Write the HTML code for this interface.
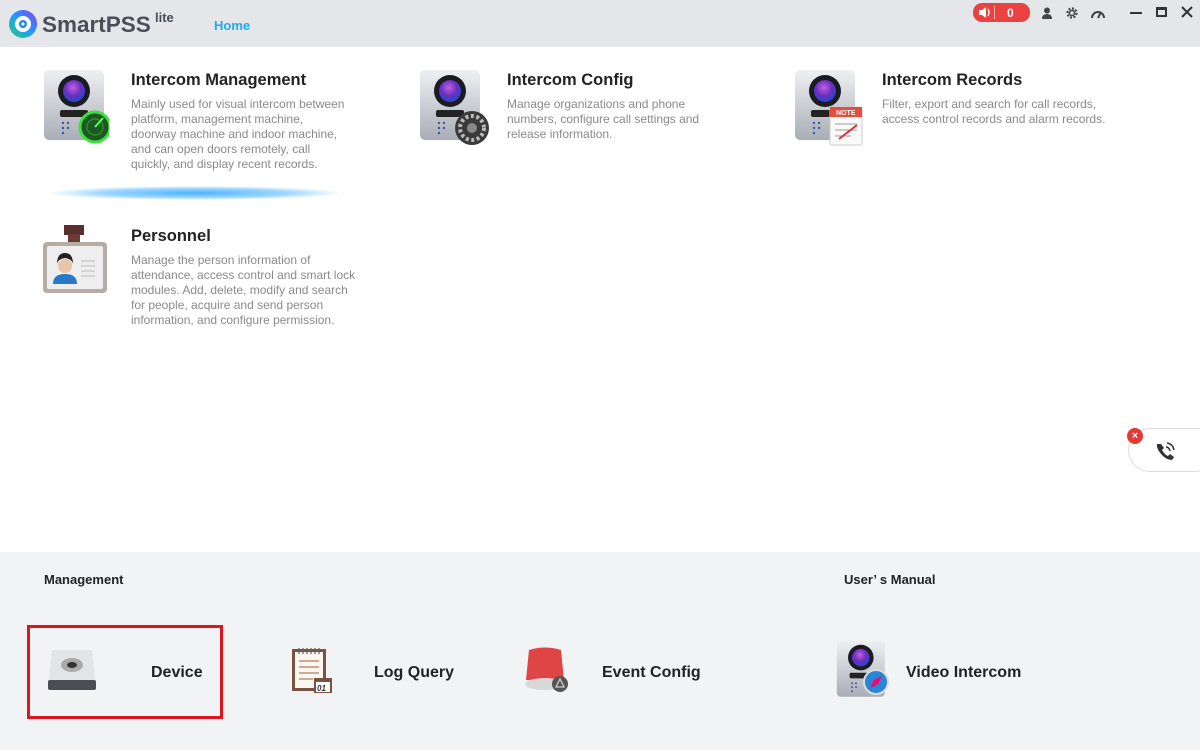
<!DOCTYPE html>
<html><head><meta charset="utf-8"><style>
*{margin:0;padding:0;box-sizing:border-box}
body{width:1200px;height:750px;overflow:hidden;font-family:"Liberation Sans",sans-serif;background:#fff;position:relative}
.hdr{position:absolute;left:0;top:0;width:1200px;height:47px;background:#e4e6ea}
.abs{position:absolute}
.t{position:absolute;font-weight:bold;font-size:16.5px;color:#222}
.d{position:absolute;font-size:12px;line-height:15px;color:#8a8a8a;white-space:nowrap}
.bot{position:absolute;left:0;top:552px;width:1200px;height:198px;background:#f2f3f5}
.lbl{position:absolute;font-size:13px;font-weight:bold;color:#222}
.it{position:absolute;font-size:16px;font-weight:bold;color:#222}
</style></head><body>
<div class="hdr">
 <svg class="abs" style="left:8px;top:9px" width="30" height="30" viewBox="0 0 30 30"><defs><linearGradient id="lg" x1="0" y1="1" x2="1" y2="0"><stop offset="0" stop-color="#2ecc71"/><stop offset=".5" stop-color="#1e9bff"/><stop offset="1" stop-color="#8a3cf0"/></linearGradient></defs><circle cx="15" cy="15" r="14" fill="url(#lg)"/><circle cx="15" cy="15" r="8" fill="#fff"/><circle cx="15" cy="15" r="4" fill="#1e88e5"/><circle cx="15" cy="15" r="1.6" fill="#fff"/></svg>
 <div class="abs" style="left:42px;top:12px;font-size:22.5px;font-weight:bold;color:#4a4f57">SmartPSS</div>
 <div class="abs" style="left:155px;top:10px;font-size:13px;font-weight:bold;color:#4a4f57">lite</div>
 <div class="abs" style="left:214px;top:18px;font-size:13px;font-weight:bold;color:#1eaaf1">Home</div>
 <div class="abs" style="left:973px;top:3px;width:57px;height:19px;border-radius:9px;background:#ec4141"></div>
 <svg class="abs" style="left:978px;top:6px" width="14" height="13" viewBox="0 0 14 13"><path d="M1 4h3l4-3v11l-4-3H1z" fill="#fff"/><path d="M10 3q2 3.5 0 7" stroke="#fff" fill="none" stroke-width="1.3"/></svg>
 <div class="abs" style="left:994px;top:6px;width:1px;height:13px;background:#fff;opacity:.6"></div>
 <div class="abs" style="left:1007px;top:6px;font-size:12px;font-weight:bold;color:#fff">0</div>
 <svg class="abs" style="left:1040px;top:6px" width="14" height="14" viewBox="0 0 14 14"><circle cx="7" cy="4.5" r="3" fill="#444"/><path d="M2 13q0-5 5-5t5 5z" fill="#444"/></svg>
 <svg class="abs" style="left:1065px;top:6px" width="14" height="14" viewBox="0 0 14 14"><circle cx="7" cy="7" r="4.5" fill="none" stroke="#444" stroke-width="2.2" stroke-dasharray="2 1.5"/><circle cx="7" cy="7" r="2.5" fill="none" stroke="#444" stroke-width="1.5"/></svg>
 <svg class="abs" style="left:1090px;top:6px" width="16" height="14" viewBox="0 0 16 14"><path d="M2 12a6 6 0 0 1 12 0" fill="none" stroke="#444" stroke-width="2"/><path d="M8 12l3-6" stroke="#444" stroke-width="2"/></svg>
 <div class="abs" style="left:1130px;top:12px;width:12px;height:2px;background:#333"></div>
 <div class="abs" style="left:1156px;top:7px;width:11px;height:10px;border:2px solid #333;border-top-width:3px"></div>
 <svg class="abs" style="left:1181px;top:6px" width="12" height="12" viewBox="0 0 12 12"><path d="M1 1l10 10M11 1L1 11" stroke="#333" stroke-width="2"/></svg>
</div>

<svg width="0" height="0" style="position:absolute"><defs>
<linearGradient id="pan" x1="0" y1="0" x2="0" y2="1"><stop offset="0" stop-color="#eef0f3"/><stop offset="1" stop-color="#a9adb5"/></linearGradient>
<radialGradient id="lens" cx=".45" cy=".35" r=".6"><stop offset="0" stop-color="#c060e0"/><stop offset=".6" stop-color="#6b2fc0"/><stop offset="1" stop-color="#2f45c8"/></radialGradient>
<g id="ic"><rect x="1" y="1" width="60" height="70" rx="5" fill="url(#pan)"/><circle cx="31" cy="22" r="16" fill="#1b1b22"/><circle cx="31" cy="22" r="11" fill="url(#lens)"/><rect x="17" y="41" width="28" height="7" rx="2" fill="#222"/><g fill="#3a5ab0"><circle cx="20" cy="54" r="1.2"/><circle cx="25" cy="54" r="1.2"/><circle cx="20" cy="59" r="1.2"/><circle cx="25" cy="59" r="1.2"/><circle cx="20" cy="64" r="1.2"/></g></g>
</defs></svg>

<svg class="abs" style="left:43px;top:69px" width="66" height="80"><use href="#ic"/><circle cx="52" cy="58" r="15" fill="#1a5a20" stroke="#3ee03e" stroke-width="3"/><circle cx="52" cy="58" r="8" fill="none" stroke="#2e8a2e" stroke-width="1.5"/><path d="M52 58l8-9" stroke="#5f5" stroke-width="2"/></svg>
<div class="abs" style="left:50px;top:186px;width:290px;height:14px;border-radius:50%;background:radial-gradient(ellipse at center,#49b4ff 0%,#9ed6ff 45%,rgba(255,255,255,0) 72%)"></div>
<div class="t" style="left:131px;top:71px">Intercom Management</div>
<div class="d" style="left:131px;top:97px">Mainly used for visual intercom between<br>platform, management machine,<br>doorway machine and indoor machine,<br>and can open doors remotely, call<br>quickly, and display recent records.</div>

<svg class="abs" style="left:419px;top:69px" width="76" height="80"><use href="#ic"/><circle cx="53" cy="59" r="17" fill="#3a3a3a"/><circle cx="53" cy="59" r="12" fill="none" stroke="#bbb" stroke-width="4" stroke-dasharray="3 2.5"/><circle cx="53" cy="59" r="5" fill="#888"/></svg>
<div class="t" style="left:507px;top:71px">Intercom Config</div>
<div class="d" style="left:507px;top:97px">Manage organizations and phone<br>numbers, configure call settings and<br>release information.</div>

<svg class="abs" style="left:794px;top:69px" width="76" height="80"><use href="#ic"/><rect x="36" y="38" width="32" height="38" rx="2" fill="#fafafa" stroke="#ccc"/><rect x="36" y="38" width="32" height="10" fill="#e84c3d"/><text x="42" y="46" font-size="7" fill="#fff" font-family="Liberation Sans" font-weight="bold">NOTE</text><path d="M41 55h22M41 61h22M41 67h16" stroke="#999"/><path d="M45 70l18-14" stroke="#d33" stroke-width="2"/></svg>
<div class="t" style="left:882px;top:71px">Intercom Records</div>
<div class="d" style="left:882px;top:97px">Filter, export and search for call records,<br>access control records and alarm records.</div>

<svg class="abs" style="left:41px;top:225px" width="68" height="70" viewBox="0 0 68 70"><rect x="23" y="0" width="20" height="10" fill="#5a2e2a"/><rect x="27" y="9" width="12" height="12" fill="#6e3a34"/><rect x="2" y="17" width="64" height="51" rx="4" fill="#b5ada5"/><rect x="6" y="21" width="56" height="43" rx="2" fill="#eeeeee"/><circle cx="24" cy="41" r="7" fill="#eac4a6"/><path d="M16 39q0-11 8-11t8 11q-1-5-8-6-7 1-8 6z" fill="#222"/><path d="M12 59q0-10 12-10t12 10z" fill="#2a78c8"/><path d="M40 36h14M40 41h14M40 46h14M40 51h14" stroke="#ccc" stroke-width="1.5"/></svg>
<div class="t" style="left:131px;top:227px">Personnel</div>
<div class="d" style="left:131px;top:253px">Manage the person information of<br>attendance, access control and smart lock<br>modules. Add, delete, modify and search<br>for people, acquire and send person<br>information, and configure permission.</div>

<div class="abs" style="left:1128px;top:428px;width:90px;height:44px;border:1px solid #ddd;border-radius:22px;background:#fff"></div>
<div class="abs" style="left:1127px;top:428px;width:16px;height:16px;border-radius:50%;background:#e53935;color:#fff;font-size:11px;font-weight:bold;text-align:center;line-height:16px">×</div>
<svg class="abs" style="left:1153px;top:439px" width="24" height="24" viewBox="0 0 24 24"><path d="M4 5q-1 4 4 10t11 6l2-3-4-3-2 2q-3-1-6-6l2-2-3-4z" fill="#333"/><path d="M13 8q3 0 4 4M14 4q6 1 7 7" stroke="#333" stroke-width="1.5" fill="none"/></svg>

<div class="bot">
 <div class="lbl" style="left:44px;top:20px">Management</div>
 <div class="lbl" style="left:844px;top:20px">User’ s Manual</div>
 <div class="abs" style="left:27px;top:73px;width:196px;height:94px;border:3px solid #e0141e"></div>
 <svg class="abs" style="left:47px;top:95px" width="50" height="48" viewBox="0 0 50 48"><path d="M5 3h40l3 30H2z" fill="#e2e4e6"/><ellipse cx="25" cy="18" rx="11" ry="7" fill="#aaa"/><ellipse cx="25" cy="18" rx="5" ry="3" fill="#333"/><rect x="1" y="33" width="48" height="10" rx="2" fill="#4a4f55"/></svg>
 <div class="it" style="left:151px;top:112px">Device</div>
 <svg class="abs" style="left:290px;top:94px" width="44" height="48" viewBox="0 0 44 48"><rect x="2" y="3" width="34" height="42" fill="#7a5242"/><rect x="5" y="6" width="28" height="36" fill="#fbf6ef"/><path d="M9 2v6M13 2v6M17 2v6M21 2v6M25 2v6M29 2v6" stroke="#666" stroke-width="1.3"/><path d="M9 15h20M9 21h20M9 27h20M9 33h14" stroke="#b98f7a" stroke-width="1.5"/><rect x="24" y="32" width="18" height="15" fill="#7a5242"/><rect x="26" y="36" width="14" height="10" fill="#fff"/><text x="27" y="45" font-size="8" font-style="italic" font-weight="bold" fill="#333" font-family="Liberation Sans">01</text></svg>
 <div class="it" style="left:374px;top:112px">Log Query</div>
 <svg class="abs" style="left:520px;top:92px" width="52" height="52" viewBox="0 0 52 52"><path d="M9 6q16-5 32 0l3 30H6z" fill="#e04545"/><ellipse cx="25" cy="40" rx="20" ry="6" fill="#d8d8d8"/><circle cx="40" cy="40" r="8" fill="#555"/><path d="M40 35l-4 8h8z" fill="none" stroke="#ccc" stroke-width="1.3"/></svg>
 <div class="it" style="left:602px;top:112px">Event Config</div>
 <svg class="abs" style="left:836px;top:88px" width="56" height="60"><g transform="scale(.8)"><use href="#ic"/></g><circle cx="40" cy="42" r="12" fill="#2a84d8" stroke="#ddd" stroke-width="2"/><path d="M34 48l4-8 8-4-4 8z" fill="#f06"/></svg>
 <div class="it" style="left:906px;top:112px">Video Intercom</div>
</div>
</body></html>
